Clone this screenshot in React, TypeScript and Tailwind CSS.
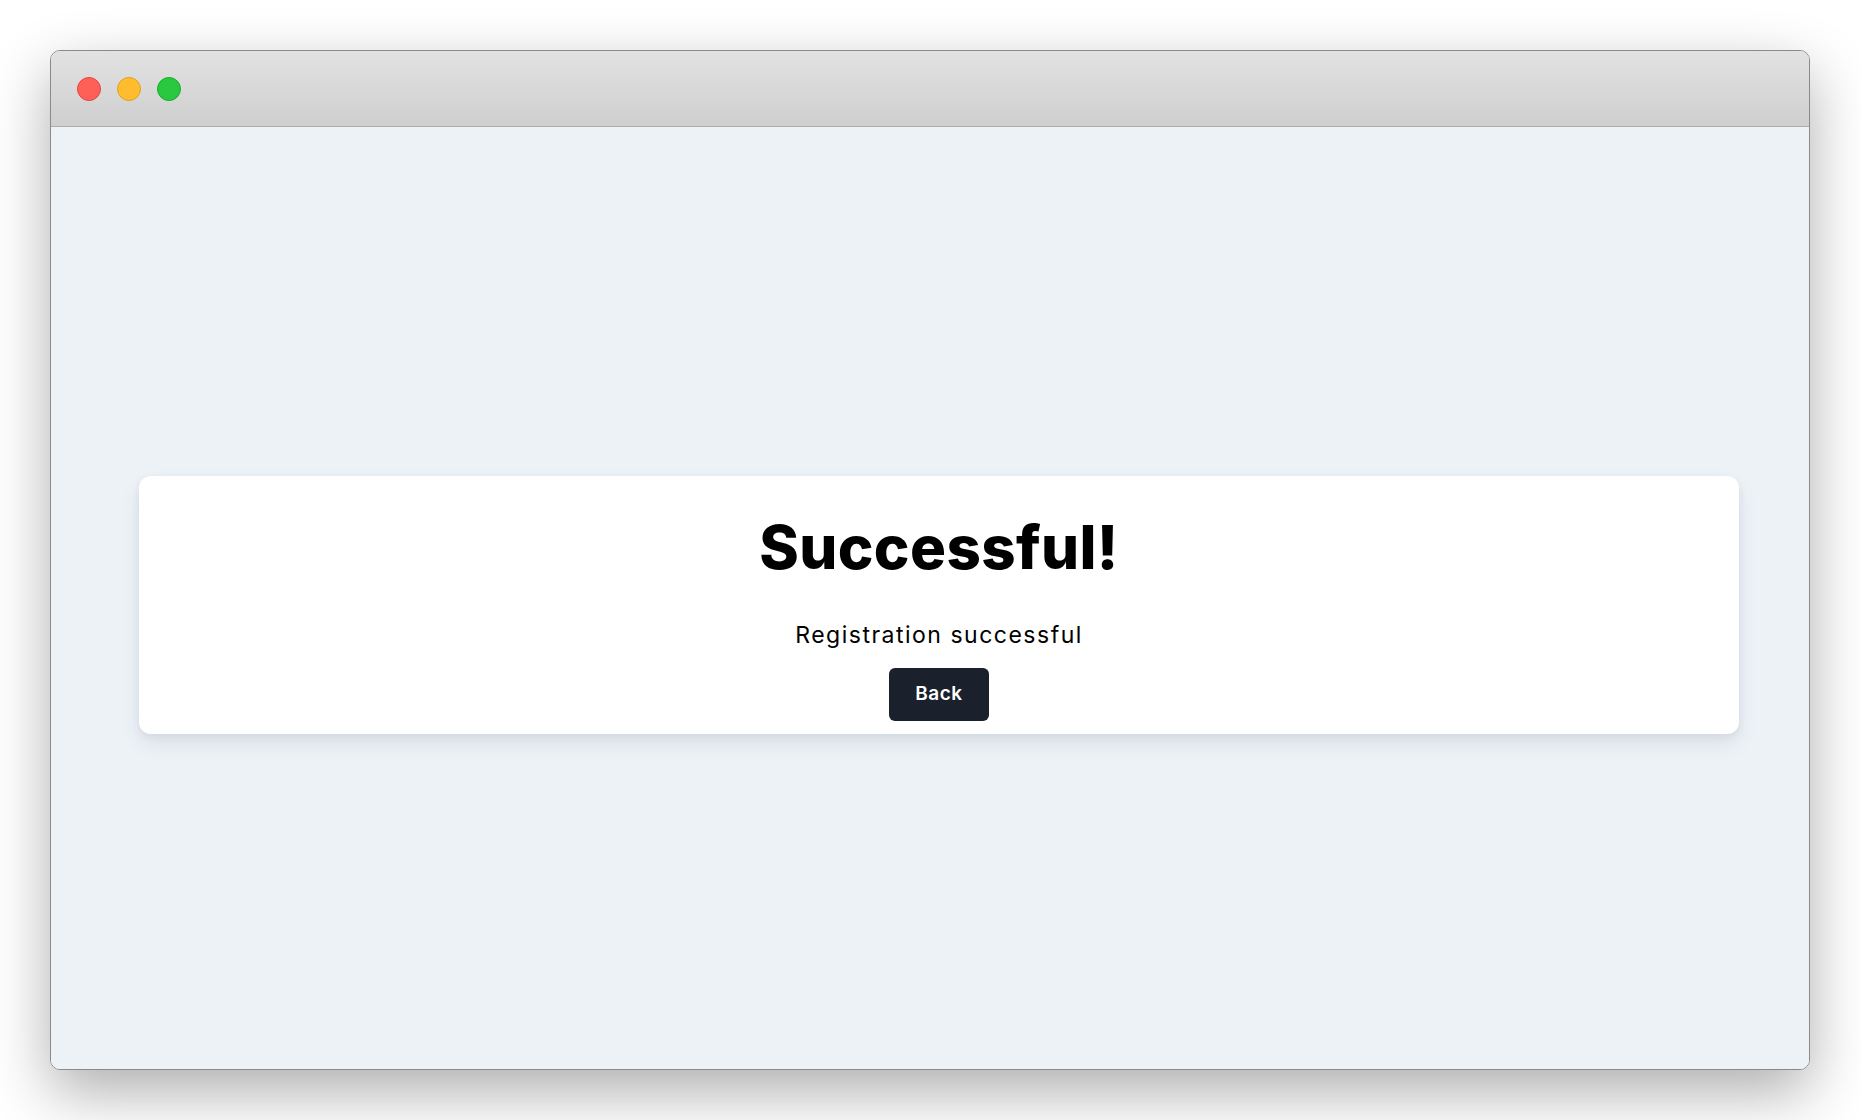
import React from 'react';

// Traffic light dot in the window title bar
const Dot = ({ color, ring }: { color: string; ring: string }) => (
  <span className={`block w-6 h-6 rounded-full border ${color} ${ring}`} />
);

const App = () => {
  return (
    <div className="w-full h-[1120px] bg-white p-[50px]" style={{ fontFamily: 'Inter, "Liberation Sans", sans-serif' }}>
      <div className="w-[1760px] h-[1020px] flex flex-col rounded-[10px] border border-[#8a8a8a] overflow-hidden shadow-[0_22px_60px_rgba(0,0,0,0.32)]">
        {/* title bar */}
        <div className="h-[76px] shrink-0 flex items-center gap-4 pl-[26px] bg-gradient-to-b from-[#e2e2e2] to-[#cfcfcf] border-b border-[#adadad]">
          <Dot color="bg-[#fe5f57]" ring="border-[#e2463f]" />
          <Dot color="bg-[#febc2e]" ring="border-[#dea123]" />
          <Dot color="bg-[#28c840]" ring="border-[#1aab29]" />
        </div>

        {/* page */}
        <div className="flex-1 bg-[#edf2f7] flex items-center justify-center pl-[18px] pt-[14px]">
          <div className="w-[1600px] h-[258px] bg-white rounded-xl shadow-[0_10px_20px_rgba(30,41,59,0.08),0_3px_8px_rgba(30,41,59,0.06)] flex flex-col items-center pt-[41px]">
            <h1 className="text-[60px] leading-none font-extrabold text-black tracking-[0.4px]">Successful!</h1>
            <p className="mt-[47px] text-[23px] leading-none text-black tracking-[1.5px]">Registration successful</p>
            <button className="mt-[21px] w-[100px] h-[53px] rounded-md bg-[#1a202c] text-white text-[19px] font-semibold tracking-[0.5px]">
              Back
            </button>
          </div>
        </div>
      </div>
    </div>
  );
};

export default App;
